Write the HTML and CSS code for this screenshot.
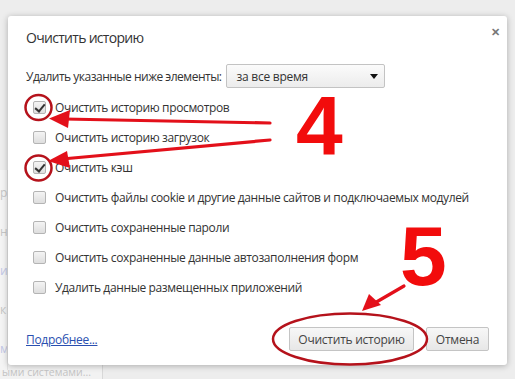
FILE: index.html
```html
<!DOCTYPE html>
<html lang="ru">
<head>
<meta charset="utf-8">
<title>Очистить историю</title>
<link rel="stylesheet" href="styles.css">
</head>
<body>
<div class="stage">
  <div class="behind-left">
    <span class="bl-text">ру</span>
    <span class="bl-text">н</span>
    <span class="bl-text blue">и</span>
    <span class="bl-text">к</span>
    <span class="bl-text blue">м</span>
  </div>
  <div class="dialog">
    <div class="header">
      <h1 class="title">Очистить историю</h1>
      <span class="close">✕</span>
    </div>
    <div class="range-row">
      <span class="range-label">Удалить указанные ниже элементы:</span>
      <div class="select">
        <span>за все время</span>
        <span class="select-arrow"></span>
      </div>
    </div>
    <ul class="options">
      <li class="option"><span class="checkbox checked"></span><span>Очистить историю просмотров</span></li>
      <li class="option"><span class="checkbox"></span><span>Очистить историю загрузок</span></li>
      <li class="option"><span class="checkbox checked"></span><span>Очистить кэш</span></li>
      <li class="option"><span class="checkbox"></span><span>Очистить файлы cookie и другие данные сайтов и подключаемых модулей</span></li>
      <li class="option"><span class="checkbox"></span><span>Очистить сохраненные пароли</span></li>
      <li class="option"><span class="checkbox"></span><span>Очистить сохраненные данные автозаполнения форм</span></li>
      <li class="option"><span class="checkbox"></span><span>Удалить данные размещенных приложений</span></li>
    </ul>
    <div class="footer">
      <a class="more" href="#">Подробнее...</a>
      <div class="buttons">
        <button class="btn btn-primary">Очистить историю</button>
        <button class="btn btn-cancel">Отмена</button>
      </div>
    </div>
  </div>
  <div class="behind-bottom">
    <span class="behind-btn">ыми системами...</span>
  </div>
  <svg class="annot" width="515" height="379" viewBox="0 0 515 379">
    <g fill="none" stroke="#b5121b" stroke-width="2.5">
      <ellipse cx="38.5" cy="107.5" rx="13" ry="12.5"/>
      <ellipse cx="38.5" cy="168" rx="13" ry="12.5"/>
      <ellipse cx="350" cy="339" rx="77" ry="25.5"/>
    </g>
    <g stroke="#e3101a" stroke-width="3.2" stroke-linecap="round">
      <line x1="270" y1="123" x2="64" y2="119"/>
      <line x1="270" y1="140" x2="62" y2="159"/>
      <line x1="404" y1="286" x2="373" y2="304"/>
    </g>
    <g fill="#e3101a">
      <polygon points="49,118.5 70,110 68,128"/>
      <polygon points="48,161 67,151 70,168"/>
      <polygon points="362,311 369,294 381,305"/>
    </g>
    <text class="big-num" x="296" y="155">4</text>
    <text class="big-num" x="400" y="285">5</text>
  </svg>
</div>
</body>
</html>
```
FILE: styles.css
```css
* { box-sizing: border-box; }
html, body { margin: 0; padding: 0; }
body {
  width: 515px;
  height: 379px;
  overflow: hidden;
  background: #ededed;
  font-family: "Open Sans", "Noto Sans", sans-serif;
  color: #333;
}
.stage {
  position: relative;
  width: 515px;
  height: 379px;
  padding: 16px 0 0 8px;
}
.behind-left {
  position: absolute;
  left: 0;
  top: 170px;
  width: 8px;
  height: 200px;
  background: #f4f4f4;
  border-right: 1px solid #e2e2e2;
  display: flex;
  flex-direction: column;
  gap: 22px;
  padding-top: 14px;
  font-size: 12px;
  color: #c6c6c6;
  overflow: hidden;
}
.bl-text.blue { color: #c3c8e6; }
.dialog {
  position: relative;
  width: 499px;
  height: 349px;
  background: #fff;
  border-radius: 3px;
  box-shadow: 0 1px 6px rgba(0,0,0,0.28);
  padding: 0 18px 14px 18px;
  display: flex;
  flex-direction: column;
}
.header {
  height: 48px;
  display: flex;
  justify-content: space-between;
  align-items: flex-start;
  padding-top: 12px;
}
.title {
  margin: 0;
  font-weight: normal;
  font-size: 14px;
  letter-spacing: -0.7px;
  line-height: 20px;
  color: #333;
}
.close {
  margin: -3px -11px 0 0;
  font-size: 11px;
  font-weight: bold;
  color: #777;
  line-height: 14px;
}
.range-row {
  height: 24px;
  display: flex;
  align-items: center;
  gap: 4px;
  font-size: 12px;
  letter-spacing: -0.5px;
}
.select {
  width: 159px;
  height: 24px;
  border: 1px solid #c3c3c3;
  border-radius: 2px;
  background: linear-gradient(#fbfbfb, #ececec);
  display: flex;
  align-items: center;
  justify-content: space-between;
  padding: 0 6px 0 10px;
  color: #333;
  letter-spacing: -0.25px;
}
.select-arrow {
  width: 0;
  height: 0;
  border-left: 4px solid transparent;
  border-right: 4px solid transparent;
  border-top: 5px solid #111;
}
.options {
  list-style: none;
  margin: 4px 0 0 0;
  padding: 0 0 0 7px;
}
.option {
  height: 30px;
  display: flex;
  align-items: center;
  gap: 9px;
  font-size: 12px;
  letter-spacing: -0.37px;
  color: #333;
  white-space: nowrap;
}
.checkbox {
  position: relative;
  flex: none;
  width: 13px;
  height: 13px;
  border: 1px solid #b4b4b4;
  border-radius: 2px;
  background: linear-gradient(#f4f4f4, #dedede);
}
.checkbox.checked::after {
  content: "";
  position: absolute;
  left: 3px;
  top: 0px;
  width: 4px;
  height: 8px;
  border-right: 2px solid #333;
  border-bottom: 2px solid #333;
  transform: rotate(40deg);
}
.footer {
  margin-top: auto;
  display: flex;
  justify-content: space-between;
  align-items: center;
}
.more {
  color: #2a4fb0;
  font-size: 12px;
  letter-spacing: -0.3px;
  text-decoration: underline;
}
.buttons {
  display: flex;
  gap: 12px;
}
.btn {
  height: 24px;
  border: 1px solid #c4c4c4;
  border-radius: 2px;
  background: linear-gradient(#f7f7f7, #e7e7e7);
  font-family: "Open Sans", "Noto Sans", sans-serif;
  font-size: 12px;
  letter-spacing: -0.25px;
  color: #444;
  padding: 0;
}
.btn-primary { width: 125px; }
.btn-cancel { width: 63px; }
.behind-bottom {
  height: 14px;
  margin-left: -8px;
  display: flex;
}
.behind-btn {
  width: 103px;
  height: 14px;
  border-right: 1px solid #d8d8d8;
  background: #f2f2f2;
  font-size: 10.5px;
  line-height: 14px;
  color: #c4c4c4;
  padding-left: 2px;
  white-space: nowrap;
}
.annot {
  position: absolute;
  left: 0;
  top: 0;
  pointer-events: none;
}
.big-num {
  font-family: "Liberation Sans", Arial, sans-serif;
  font-weight: bold;
  font-size: 84px;
  fill: #f20c0c;
}
```
